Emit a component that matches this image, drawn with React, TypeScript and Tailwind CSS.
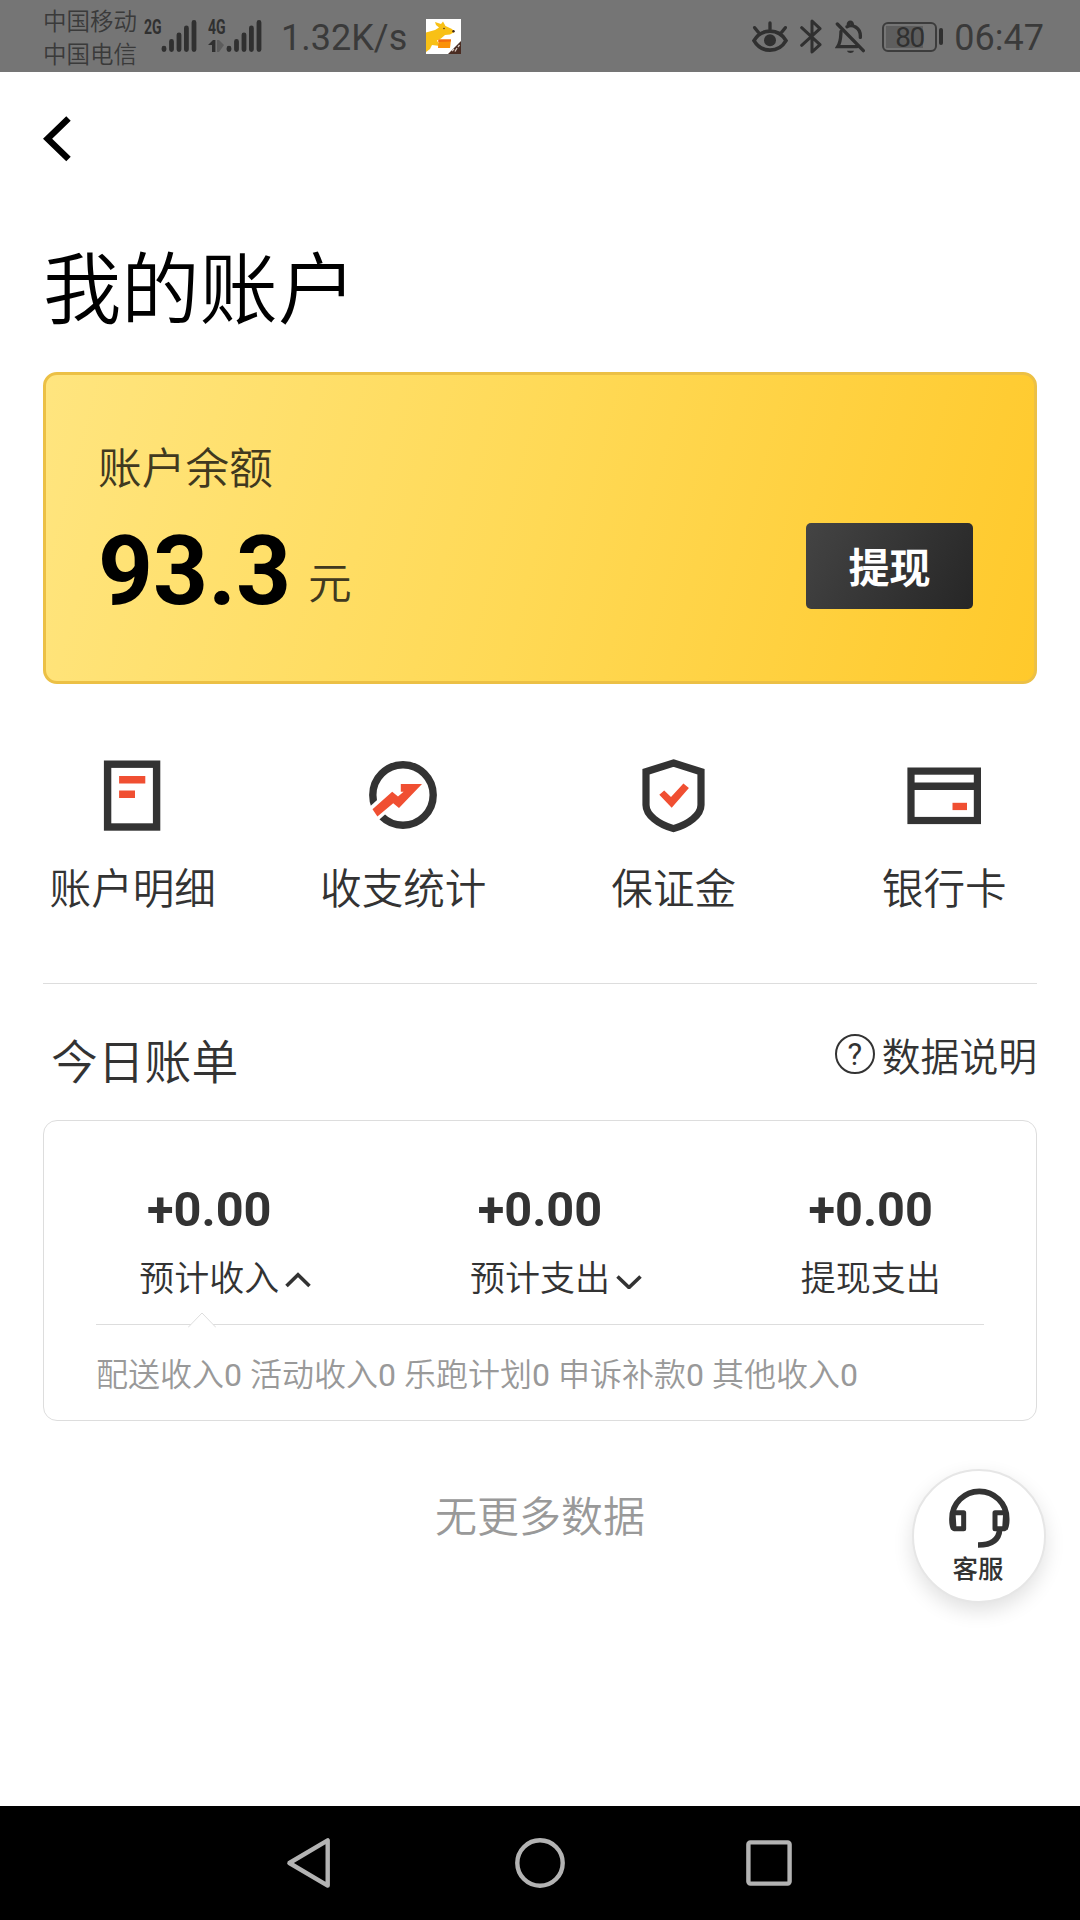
import { useState } from 'react';

const bills = [
  { id: 1, value: '+0.00', label: '预计收入', expandable: true },
  { id: 2, value: '+0.00', label: '预计支出', expandable: true },
  { id: 3, value: '+0.00', label: '提现支出', expandable: false },
];

const details = [
  { label: '配送收入', value: 0 },
  { label: '活动收入', value: 0 },
  { label: '乐跑计划', value: 0 },
  { label: '申诉补款', value: 0 },
  { label: '其他收入', value: 0 },
];

function DetailIcon() {
  return (
    <svg className="w-20 h-20" viewBox="0 0 80 80" fill="none">
      <rect x="15.6" y="9.2" width="49" height="62.8" stroke="#333" strokeWidth="7.4" />
      <path d="M27.1 21.1h26.2v7.5H27.1zM27.1 35.5H43v7.5H27.1z" fill="#f04f32" />
    </svg>
  );
}

function StatsIcon() {
  return (
    <svg className="w-20 h-20" viewBox="0 0 80 80" fill="none">
      <circle cx="40" cy="40" r="30.2" stroke="#333" strokeWidth="7.4" />
      <path d="M1 67.500L20 50.500" stroke="#fff" strokeWidth="16" />
      <path
        d="M9.5 54.3L29.2 36.8L35 41.4L40.6 36.8L37.8 36.8V29.1H59L36 53L30.2 48.2L14.4 61.4Z"
        fill="#f04f32"
      />
    </svg>
  );
}

function DepositIcon() {
  return (
    <svg className="w-20 h-20" viewBox="0 0 80 80" fill="none">
      <path
        d="M40.500 8L68 16.700V50C68 60 55.500 69.500 40.500 73.600C25.500 69.500 13 60 13 50V16.700Z"
        stroke="#333"
        strokeWidth="7.2"
      />
      <path d="M26.300 39.8L31.200 35.5L38 42.1L50.400 28.5L55.900 33.1L38.700 52.8Z" fill="#f04f32" />
    </svg>
  );
}

function CardIcon() {
  return (
    <svg className="w-20 h-20" viewBox="0 0 80 80" fill="none">
      <rect x="7" y="16.1" width="66.4" height="49.4" stroke="#333" strokeWidth="7.2" />
      <path d="M7 31.3H73" stroke="#333" strokeWidth="7.4" />
      <path d="M48.5 47.8H63v7.3H48.5z" fill="#f04f32" />
    </svg>
  );
}

const menu = [
  { label: '账户明细', Icon: DetailIcon },
  { label: '收支统计', Icon: StatsIcon },
  { label: '保证金', Icon: DepositIcon },
  { label: '银行卡', Icon: CardIcon },
];

function SignalBars() {
  return (
    <svg className="w-9 h-[34px]" viewBox="0 0 36 34" stroke="#303030" strokeWidth="4.8" strokeLinecap="round">
      <path d="M3 29.2V30.6M10.5 22.4V30.6M18 15.8V30.6M25.4 9V30.6M33 3.4V30.6" />
    </svg>
  );
}

function StatusBar() {
  return (
    <div className="h-[72px] bg-[#757575] text-[#3a3a3a] flex items-center pl-[43px] pr-9">
      <div className="flex flex-col text-[23.500px] leading-[33px] font-[350] pt-[5px]">
        <span>中国移动</span>
        <span>中国电信</span>
      </div>

      {/* Sinal dos dois chips */}
      <div className="flex ml-[7px]">
        <span className="w-[17px] text-[20px] leading-[16px] font-bold text-[#303030]">
          <span className="inline-block origin-left scale-x-[0.7]">2G</span>
        </span>
        <SignalBars />
      </div>
      <div className="flex ml-[11px]">
        <div className="w-[18px]">
          <div className="w-[18px] text-[20px] leading-[16px] font-bold text-[#303030]">
            <span className="inline-block origin-left scale-x-[0.7]">4G</span>
          </div>
          <svg className="w-4 h-3 mt-[5px]" viewBox="0 0 16 12">
            <path d="M0 5L5 0H7.4V12H4V5Z" fill="#303030" />
            <path d="M9 0H11L16 5L11 12H9Z" fill="#5c5c5c" />
          </svg>
        </div>
        <SignalBars />
      </div>

      <span className="ml-[19px] mt-[3px] text-[36px] leading-[44px]">1.32K/s</span>

      <svg className="w-[35px] h-[35px] ml-[19px] mt-px" viewBox="0 0 35 35">
        <rect width="35" height="35" fill="#fff" />
        <path
          d="M9 3L15 5L17 2.500L19.500 7L26 10L28.500 13L24 15.500L19 16L15 19.500L11 21.500L14 27L6 26L4 30L0 33V13.500L9 11L13 8.500L10 6Z"
          fill="#f8c016"
        />
        <path d="M12.500 20.500H25L24 29H12Z" fill="#fb9108" />
        <path d="M12.500 20.500H25L24.700 22.500L12.400 23Z" fill="#f26a10" />
        <circle cx="18" cy="9.500" r="0.800" fill="#4a3020" />
        <circle cx="27.500" cy="12.300" r="1.200" fill="#3a241c" />
        <path d="M35 22V35H22Z" fill="#4a2c22" />
        <path d="M26 32L28 30M29 32.500L31 29M32 28L33.500 26" stroke="#d8c8c0" strokeWidth="1.300" />
      </svg>

      <div className="flex items-center ml-auto mt-px">
        <svg className="w-9 h-8" viewBox="0 0 108 96" fill="none" stroke="#303030" strokeWidth="10" strokeLinecap="round">
          <path d="M6 59C28 21 80 21 102 59C80 97 28 97 6 59Z" strokeWidth="11" />
          <circle cx="54" cy="58" r="18" fill="#303030" stroke="none" />
          <path d="M54 6V24M8 20L19 34M100 20L89 34" />
        </svg>
        <svg
          className="w-[22px] h-[35px] ml-3"
          viewBox="0 0 66 105"
          fill="none"
          stroke="#303030"
          strokeWidth="9"
          strokeLinecap="round"
          strokeLinejoin="round"
        >
          <path d="M5 26L60 77L36 99V6L60 29L5 79" />
        </svg>
        <svg className="w-[31px] h-[34px] ml-[13px]" viewBox="0 0 93 102" fill="none" stroke="#303030" strokeWidth="10" strokeLinecap="round">
          <path d="M18 34C17 52 18 65 8 80H66M36 20C52 12 78 22 76 52M40 14C39 4 53 4 52 14" />
          <path d="M7 12L85 92" />
          <path d="M36 92H57C54 101 39 101 36 92Z" fill="#303030" stroke="none" />
        </svg>

        {/* Bateria */}
        <div className="flex items-center ml-4">
          <div className="w-[55px] h-[30px] border-2 border-[#3c3c3c] rounded-[6px] p-[2px]">
            <div className="w-[37px] h-[22px] bg-[#5e5e5e] pl-[9px] text-[28px] leading-[23px] tracking-[-1.500px] text-[#303030]">
              80
            </div>
          </div>
          <div className="w-1 h-[17px] ml-0.5 bg-[#303030] rounded-sm" />
        </div>
        <span className="ml-[11px] mt-0.5 text-[36px] leading-[44px]">06:47</span>
      </div>
    </div>
  );
}

export default function App() {
  const [open, setOpen] = useState(1);

  return (
    <div className="w-[1080px] h-[1920px] bg-white text-[#333] flex flex-col relative overflow-hidden font-['Roboto','Noto_Sans_CJK_SC',sans-serif]">
      <StatusBar />

      <main className="flex-1 px-[43px] pt-11">
        <svg className="w-7 h-[46px]" viewBox="0 0 28 46" fill="none" stroke="#000" strokeWidth="6.4">
          <path d="M25.500 2.500L4.600 22.700L25.500 43" />
        </svg>

        <h1 className="mt-[81px] text-[78.300px] leading-[96px] font-[350] text-black">我的账户</h1>

        {/* Saldo da conta */}
        <section className="mt-[33px] h-[312px] w-[994px] rounded-[14px] border-3 border-[#ecc045] bg-[linear-gradient(105deg,#ffe57f,#ffd955_50%,#ffc92b)] flex justify-between pl-[52px] pr-[61px]">
          <div className="pt-16">
            <p className="text-[43.700px] leading-[60px] font-[350] text-[#40391f]">账户余额</p>
            <div className="flex items-end mt-6">
              <span className="text-[96px] leading-[96px] font-bold text-black">93.3</span>
              <span className="ml-[17px] mb-[5px] text-[43.700px] leading-[60px] font-[350] text-[#40391f]">元</span>
            </div>
          </div>
          <button className="mt-[148px] w-[167px] h-[86px] rounded-[5px] bg-[linear-gradient(120deg,#444,#262626)] text-white font-bold text-[41px] leading-[80px] pt-1.5">
            提现
          </button>
        </section>

        <nav className="mt-[71px] -ml-[46px] w-[1082px] grid grid-cols-4">
          {menu.map(({ label, Icon }) => (
            <div key={label} className="flex flex-col items-center">
              <Icon />
              <span className="mt-[25px] pl-px text-[41.600px] leading-[60px] font-[350]">{label}</span>
            </div>
          ))}
        </nav>

        <div className="mt-[63px] h-px w-[994px] bg-[#ddd]" />

        <div className="mt-[49px] w-[994px] flex justify-between items-start">
          <h2 className="pl-2 text-[46.800px] leading-[60px] font-[350]">今日账单</h2>
          <div className="flex items-start mt-px">
            <span className="w-10 h-10 rounded-full border-[2.500px] border-[#333] text-[31px] leading-[37px] font-normal text-center">?</span>
            <span className="ml-[7px] text-[38.800px] leading-10 font-[350] mt-1">数据说明</span>
          </div>
        </div>

        <section className="mt-[27px] w-[994px] h-[301px] rounded-[14px] border border-[#ddd] pt-[65px]">
          <div className="grid grid-cols-3">
            {bills.map((bill) => (
              <div key={bill.id} className="flex flex-col items-center" onClick={() => bill.expandable && setOpen(bill.id)}>
                <span className="text-[48.700px] leading-[48px] font-bold">{bill.value}</span>
                <span className="relative mt-[26px] text-[35px] leading-10 font-[350]">
                  {bill.label}
                  {bill.expandable && (
                    <svg
                      className="absolute left-[146px] top-[12px] w-[26px] h-[17px]"
                      viewBox="0 0 26 17"
                      fill="none"
                      stroke="#333"
                      strokeWidth="3.6"
                    >
                      <path d={open === bill.id ? 'M1.500 14L13 2.800L24.500 14' : 'M1.500 4.500L13 15.500L24.500 4.500'} />
                    </svg>
                  )}
                </span>
              </div>
            ))}
          </div>

          <div className="relative mt-[24px] mx-[52px] h-px bg-[#ddd]">
            <svg className="absolute left-[92px] top-[-12px] w-7 h-4" viewBox="0 0 28 16">
              <path d="M0 15.500L14 1L28 15.500Z" fill="#fff" />
              <path d="M0 15.500L14 1L28 15.500" fill="none" stroke="#ddd" />
            </svg>
          </div>

          <p className="mt-[30px] mx-[52px] flex gap-2 text-[32px] leading-10 font-[350] text-[#999]">
            {details.map((item) => (
              <span key={item.label}>
                {item.label}
                <span className="font-normal">{item.value}</span>
              </span>
            ))}
          </p>
        </section>

        <p className="mt-[67px] text-[42px] leading-[60px] font-[350] text-[#999] text-center">无更多数据</p>
      </main>

      {/* Atendimento */}
      <button className="absolute left-[912px] top-[1469px] w-[134px] h-[134px] rounded-full bg-white border-2 border-[#e6e6e6] shadow-[0_8px_20px_rgba(0,0,0,0.12)] flex flex-col items-center pt-[15px]">
        <svg className="w-[65px] h-[65px]" viewBox="260 140 195 195" fill="none" stroke="#333">
          <path d="M280 268C274 256 275 248 275 238A82 82 0 0 1 439 238C439 248 440 256 434 268" strokeWidth="17" />
          <path d="M278 220H310V268H281Z" strokeWidth="15" strokeLinejoin="round" />
          <path d="M436 220H404V268H433Z" strokeWidth="15" strokeLinejoin="round" />
          <path d="M418 270C416 302 395 317 353 317" strokeWidth="17" />
        </svg>
        <span className="mt-[3px] mr-[2px] text-[25.500px] leading-[30px] font-medium">客服</span>
      </button>

      <footer className="h-[114px] bg-black flex items-center justify-between pl-[285px] pr-[286px]">
        <svg className="w-12 h-[52px]" viewBox="0 0 48 52" fill="none" stroke="#b3b3b3" strokeWidth="4.4" strokeLinejoin="round">
          <path d="M4.400 26L42.700 3.400V48.600Z" />
        </svg>
        <svg className="w-[52px] h-[52px] ml-0.5" viewBox="0 0 52 52" fill="none" stroke="#b3b3b3" strokeWidth="4.4">
          <circle cx="26" cy="26" r="22.700" />
        </svg>
        <svg className="w-[50px] h-[50px]" viewBox="0 0 50 50" fill="none" stroke="#b3b3b3" strokeWidth="4.4">
          <rect x="4.400" y="4.400" width="41.200" height="41.200" rx="2" />
        </svg>
      </footer>
    </div>
  );
}
